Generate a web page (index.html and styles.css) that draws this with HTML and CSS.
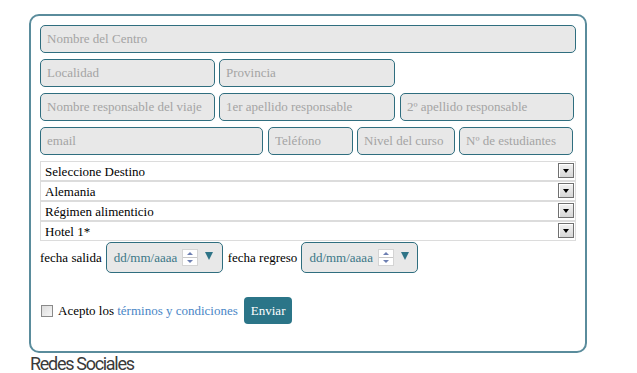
FILE: index.html
```html
<!DOCTYPE html>
<html lang="es">
<head>
    <meta charset="UTF-8">
    <meta name="viewport" content="width=device-width, initial-scale=1.0">
    <title>Solicitud de viaje</title>
    <link rel="stylesheet" href="styles.css">
</head>
<body>

    <div class="page">

        <!-- Formulario de solicitud -->
        <form class="form-box" onsubmit="return false;">

            <div class="row">
                <input type="text" class="field w-536" placeholder="Nombre del Centro">
            </div>

            <div class="row">
                <input type="text" class="field w-175" placeholder="Localidad">
                <input type="text" class="field w-176" placeholder="Provincia">
            </div>

            <div class="row">
                <input type="text" class="field w-175" placeholder="Nombre responsable del viaje">
                <input type="text" class="field w-176" placeholder="1er apellido responsable">
                <input type="text" class="field w-174 ml-1" placeholder="2º apellido responsable">
            </div>

            <div class="row">
                <input type="text" class="field w-223" placeholder="email">
                <input type="text" class="field w-85 ml-1" placeholder="Teléfono" autofocus>
                <input type="text" class="field w-98" placeholder="Nivel del curso">
                <input type="text" class="field w-114" placeholder="Nº de estudiantes">
            </div>

            <!-- Desplegables -->
            <div class="selects">
                <div class="select-wrap">
                    <select><option>Seleccione Destino</option></select>
                    <span class="select-arrow"></span>
                </div>
                <div class="select-wrap">
                    <select><option>Alemania</option></select>
                    <span class="select-arrow"></span>
                </div>
                <div class="select-wrap">
                    <select><option>Régimen alimenticio</option></select>
                    <span class="select-arrow"></span>
                </div>
                <div class="select-wrap">
                    <select><option>Hotel 1*</option></select>
                    <span class="select-arrow"></span>
                </div>
            </div>

            <!-- Fechas -->
            <div class="date-row">
                <label>fecha salida</label>
                <div class="date-field">
                    <span class="date-text">dd/mm/aaaa</span>
                    <span class="spin"><i class="up"></i><i class="down"></i></span>
                    <span class="caret"></span>
                </div>
                <label class="ml-1">fecha regreso</label>
                <div class="date-field">
                    <span class="date-text">dd/mm/aaaa</span>
                    <span class="spin"><i class="up"></i><i class="down"></i></span>
                    <span class="caret"></span>
                </div>
            </div>

            <!-- Condiciones y envío -->
            <div class="agree-row">
                <input type="checkbox" class="check" id="acepto">
                <label for="acepto">Acepto los <a href="#" class="link">términos y condiciones</a></label>
                <button type="submit" class="send-btn">Enviar</button>
            </div>

        </form>

        <h3 class="social-title">Redes Sociales</h3>
    </div>

</body>
</html>
```

FILE: styles.css
```css
/* Estilos generales */
body {
    margin: 0;
    background-color: #fff;
    color: #000;
    font-family: "Liberation Serif", "Times New Roman", serif;
    font-size: 13px;
}

.page {
    padding: 14px 0 0 29px;
}

/* Caja del formulario */
.form-box {
    width: 558px;
    box-sizing: border-box;
    border: 2px solid #5a8c9c;
    border-radius: 10px;
    padding: 9px 9px 27px 9px;
    margin: 0;
}

.row {
    display: flex;
    gap: 4px;
    margin-bottom: 6px;
}

/* Campos de texto */
.field {
    height: 28px;
    box-sizing: border-box;
    border: 1px solid #2f6e7f;
    border-radius: 5px;
    background-color: #e8e8e8;
    padding: 0 6px;
    margin: 0;
    font-family: "Liberation Serif", serif;
    font-size: 13px;
    color: #333;
    outline: none;
}

.field::placeholder {
    color: #a4a4a4;
}

.w-536 { width: 536px; }
.w-223 { width: 223px; }
.w-176 { width: 176px; }
.w-175 { width: 175px; }
.w-174 { width: 174px; }
.w-114 { width: 114px; }
.w-98 { width: 98px; }
.w-85 { width: 85px; }
.ml-1 { margin-left: 1px; }

/* Desplegables */
.selects {
    display: flex;
    flex-direction: column;
    width: 536px;
}

.select-wrap {
    position: relative;
    height: 20px;
}

.select-wrap select {
    appearance: none;
    -webkit-appearance: none;
    width: 100%;
    height: 20px;
    box-sizing: border-box;
    border: 1px solid #dcdcdc;
    border-radius: 0;
    background-color: #fff;
    padding: 0 4px;
    margin: 0;
    font-family: "Liberation Serif", serif;
    font-size: 13px;
    color: #000;
    outline: none;
}

.select-arrow {
    position: absolute;
    right: 2px;
    top: 2px;
    width: 16px;
    height: 15px;
    box-sizing: border-box;
    border: 1px solid #707070;
    box-shadow: inset 1px 1px 0 #fff;
    background: linear-gradient(#f2f2f2, #d6d6d6);
    pointer-events: none;
}

.select-arrow::after {
    content: "";
    position: absolute;
    left: 4px;
    top: 5px;
    border-left: 3.5px solid transparent;
    border-right: 3.5px solid transparent;
    border-top: 4px solid #000;
}

/* Fechas */
.date-row {
    display: flex;
    align-items: center;
    gap: 4px;
    margin-top: 1px;
}

.date-field {
    display: flex;
    align-items: center;
    width: 117px;
    height: 31px;
    box-sizing: border-box;
    border: 1px solid #2f6e7f;
    border-radius: 5px;
    background-color: #e8e8e8;
    padding-left: 7px;
    color: #3b7787;
}

.date-text {
    font-size: 13px;
}

.spin {
    display: flex;
    flex-direction: column;
    justify-content: space-around;
    align-items: center;
    width: 16px;
    height: 17px;
    box-sizing: border-box;
    margin-left: 5px;
    border: 1px solid #d4d4d4;
    background: linear-gradient(#fff 45%, #c8c8c8 45%, #c8c8c8 55%, #fff 55%);
}

.spin i {
    display: block;
    width: 0;
    height: 0;
    border-left: 3px solid transparent;
    border-right: 3px solid transparent;
}

.spin .up {
    border-bottom: 3px solid #6d7fb2;
}

.spin .down {
    border-top: 3px solid #6d7fb2;
}

.caret {
    width: 0;
    height: 0;
    margin-left: 7px;
    margin-top: -4px;
    border-left: 4px solid transparent;
    border-right: 4px solid transparent;
    border-top: 8px solid #2f7487;
}

/* Condiciones */
.agree-row {
    display: flex;
    align-items: center;
    margin-top: 24px;
}

.check {
    appearance: none;
    -webkit-appearance: none;
    width: 12px;
    height: 12px;
    margin: 0 5px 0 1px;
    border: 1px solid #8a8a8a;
    background: linear-gradient(135deg, #dcdcdc, #f6f6f6);
}

.link {
    color: #4a86c6;
    text-decoration: none;
}

.send-btn {
    margin-left: 6px;
    height: 27px;
    padding: 0 7px;
    border: none;
    border-radius: 4px;
    background-color: #2b7588;
    color: #fff;
    font-family: "Liberation Serif", serif;
    font-size: 13px;
    cursor: pointer;
}

/* Pie */
.social-title {
    margin: 0 0 0 1px;
    font-family: Roboto, sans-serif;
    font-size: 18px;
    font-weight: 400;
    letter-spacing: -1.3px;
    line-height: 21px;
    color: #3a3a3a;
}
```
